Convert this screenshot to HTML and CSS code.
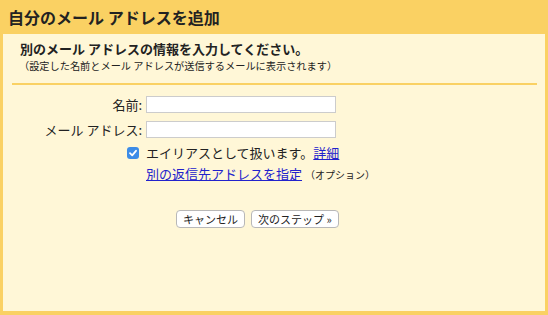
FILE: index.html
```html
<!DOCTYPE html>
<html lang="ja">
<head>
    <meta charset="UTF-8">
    <title>自分のメール アドレスを追加</title>
    <link rel="stylesheet" href="styles.css">
</head>
<body>
    <div class="dialog">
        <div class="title">自分のメール アドレスを追加</div>
        <div class="panel">
            <div class="intro">
                <div class="heading">別のメール アドレスの情報を入力してください。</div>
                <div class="note">（設定した名前とメール アドレスが送信するメールに表示されます）</div>
            </div>
            <div class="rule"></div>

            <form class="form">
                <label for="name">名前:</label>
                <input type="text" id="name">

                <label for="email">メール アドレス:</label>
                <input type="text" id="email">

                <span class="check-cell">
                    <span class="checkbox">
                        <svg width="10" height="10" viewBox="0 0 10 10"><path d="M2 5.2 L4.2 7.3 L8 2.8" fill="none" stroke="#fff" stroke-width="1.8" stroke-linecap="round" stroke-linejoin="round"/></svg>
                    </span>
                </span>
                <span class="row-text">エイリアスとして扱います。<a href="#">詳細</a></span>

                <span class="reply"></span>
                <span class="row-text reply"><a href="#">別の返信先アドレスを指定</a> <small>（オプション）</small></span>
            </form>

            <div class="buttons">
                <button type="button">キャンセル</button>
                <button type="button">次のステップ »</button>
            </div>
        </div>
    </div>
</body>
</html>
```

FILE: styles.css
```css
body {
    margin: 0;
    font-family: "Noto Sans CJK JP", "Noto Sans", sans-serif;
    color: #222;
}

.dialog {
    width: 548px;
    height: 315px;
    box-sizing: border-box;
    background-color: #fad163;
    padding: 0 3px 4px 3px;
    display: flex;
    flex-direction: column;
}

.title {
    height: 34px;
    line-height: 34px;
    padding-left: 5px;
    font-size: 16px;
    font-weight: bold;
    color: #222;
}

.panel {
    flex: 1;
    background-color: #fff7d7;
}

.intro {
    padding: 6px 0 0 17px;
}

.heading {
    font-size: 13px;
    font-weight: bold;
    line-height: 18px;
}

.note {
    font-size: 10.2px;
    line-height: 16px;
    margin-left: -1px;
}

.rule {
    height: 2px;
    background-color: #fad163;
    margin: 9px 8px 0 9px;
}

.form {
    display: grid;
    grid-template-columns: 139px 190px;
    column-gap: 4px;
    row-gap: 6px;
    align-items: center;
    margin-top: 10px;
    font-size: 13px;
}

.form label {
    text-align: right;
}

.form input {
    height: 17px;
    box-sizing: border-box;
    border: 1px solid #ccc;
    margin: 0;
    padding: 1px 3px;
    background: #fff;
}

.check-cell {
    display: flex;
    justify-content: flex-end;
    padding-right: 3px;
    height: 20px;
    align-items: center;
}

.checkbox {
    width: 12px;
    height: 12px;
    border-radius: 3px;
    background-color: #3c8ce7;
    display: flex;
    align-items: center;
    justify-content: center;
}

.check-cell,
.check-cell + .row-text {
    margin-top: -2px;
}

.row-text {
    white-space: nowrap;
    line-height: 20px;
}

.reply {
    margin-top: -5px;
}

a {
    color: #2222cc;
    text-decoration: underline;
}

small {
    font-size: 10px;
    color: #222;
}

.buttons {
    display: flex;
    gap: 6px;
    margin-top: 25px;
    padding-left: 173px;
}

.buttons button {
    font-family: inherit;
    font-size: 11px;
    height: 18px;
    line-height: 14px;
    padding: 0 6px;
    background: #fff;
    border: 1px solid #b8b8b8;
    border-radius: 4px;
    color: #222;
}
```
